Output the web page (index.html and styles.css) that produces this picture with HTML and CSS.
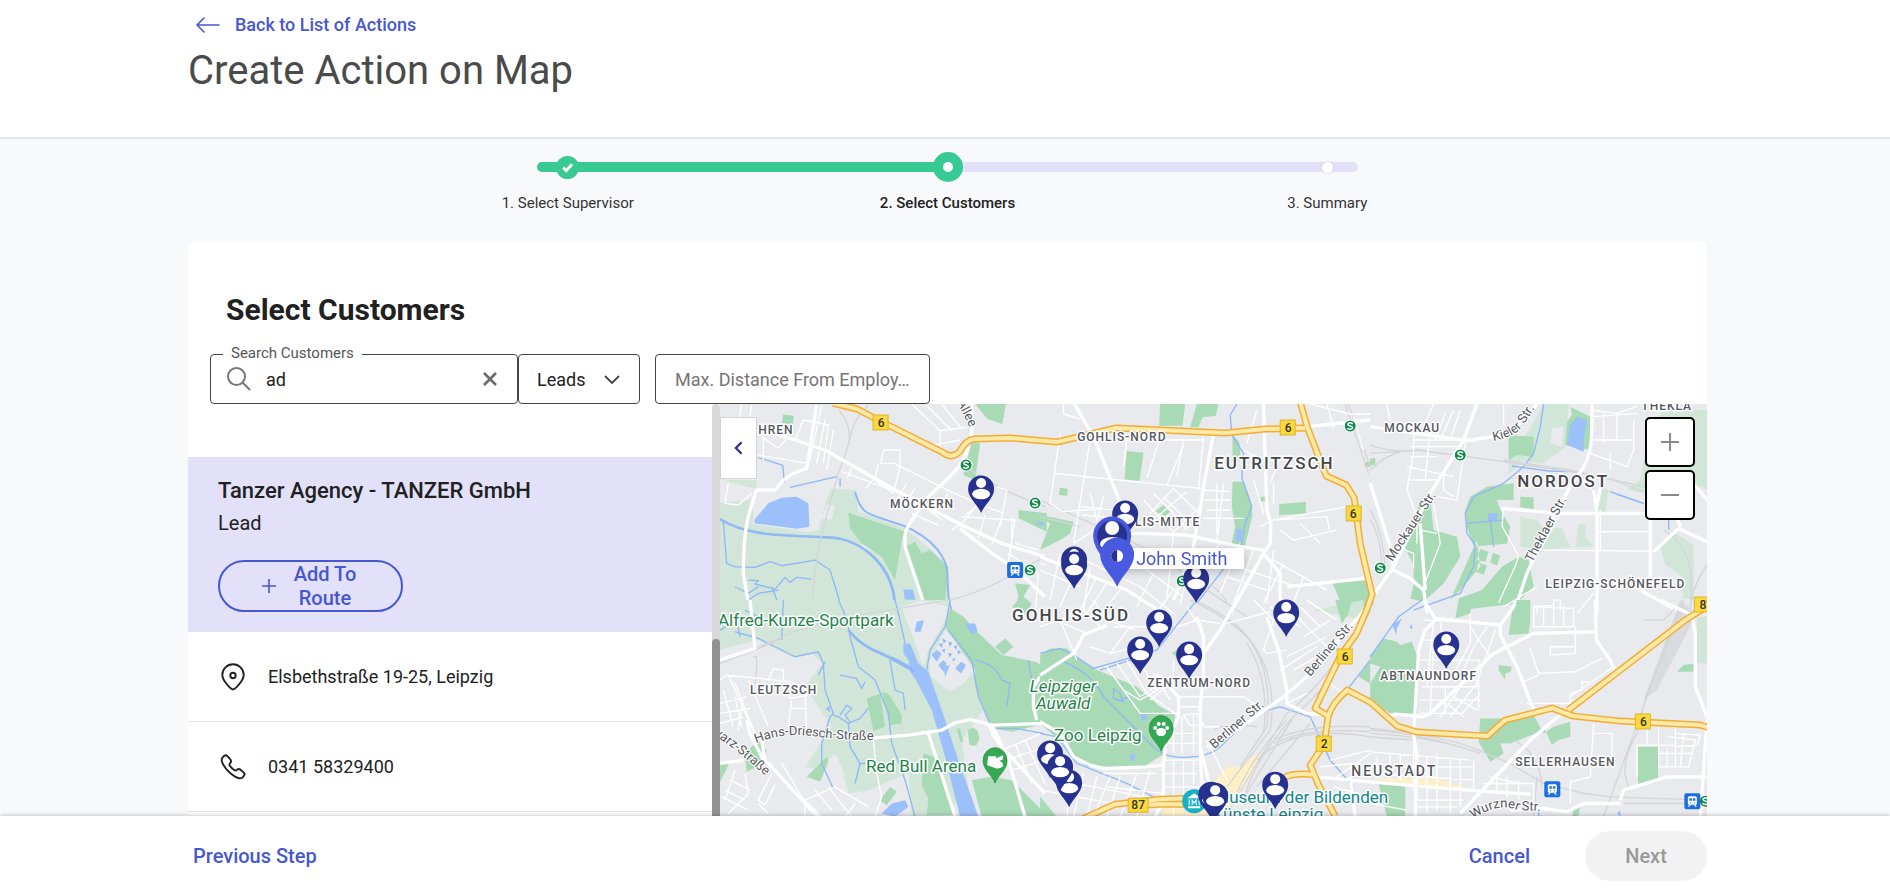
FILE: index.html
```html
<!DOCTYPE html>
<html lang="en">
<head>
<meta charset="utf-8">
<title>Create Action on Map</title>
<link rel="stylesheet" href="styles.css">
</head>
<body>
<header class="page-header">
  <a class="back-link" href="#">
    <svg class="back-icon" viewBox="0 0 24 16" width="24" height="16"><path d="M8 1 1 8l7 7M1 8h22" fill="none" stroke="currentColor" stroke-width="1.6" stroke-linecap="round" stroke-linejoin="round"/></svg>
    Back to List of Actions
  </a>
  <h1 class="page-title">Create Action on Map</h1>
</header>

<main class="content">
  <ol class="stepper">
    <li class="step step-done"><span class="dot"><svg viewBox="0 0 24 24" width="23" height="23"><path d="m7.500 12 3.200 3.300 6-6.600" fill="none" stroke="#fff" stroke-width="3"/></svg></span><span class="step-label">1. Select Supervisor</span></li>
    <li class="step step-current"><span class="dot"></span><span class="step-label">2. Select Customers</span></li>
    <li class="step step-next"><span class="dot"></span><span class="step-label">3. Summary</span></li>
  </ol>

  <section class="card">
    <h2 class="card-title">Select Customers</h2>
    <form class="filters">
      <div class="field field-search">
        <label class="field-label" for="search">Search Customers</label>
        <svg viewBox="0 0 24 24" width="24" height="24" fill="none" stroke="#777" stroke-width="2"><circle cx="9.500" cy="9.500" r="8.500"/><path d="m15.800 15.800 7.200 7.200"/></svg>
        <input id="search" type="text" value="ad">
        <button class="clear" type="button" aria-label="Clear"><svg viewBox="0 0 14 14" width="14" height="14"><path d="m1 1 12 12M13 1 1 13" stroke="#6b6b6b" stroke-width="2.600"/></svg></button>
      </div>
      <div class="field field-type">
        <select aria-label="Customer type"><option>Leads</option></select>
        <svg class="chevron" viewBox="0 0 16 9" width="16" height="9"><path d="m1 1 7 7 7-7" fill="none" stroke="#444" stroke-width="1.800"/></svg>
      </div>
      <div class="field field-distance">
        <input type="text" aria-label="Max. distance" placeholder="Max. Distance From Employ…">
      </div>
    </form>

    <div class="workspace">
      <aside class="results">
        <div class="result-list">
          <div class="customer">
            <h3 class="customer-name">Tanzer Agency - TANZER GmbH</h3>
            <p class="customer-type">Lead</p>
            <button class="add-route" type="button">
              <svg viewBox="0 0 14 14" width="14" height="14"><path d="M7 0v14M0 7h14" stroke="currentColor" stroke-width="1.600"/></svg>
              <span class="add-text">Add To Route</span>
            </button>
          </div>
          <div class="detail">
            <svg viewBox="0 0 28 28" width="28" height="28" fill="none" stroke="#222" stroke-width="1.900"><path d="M14 26.500c-1 0-2-.7-3-1.800C7 20.500 3.300 17 3.300 12a10.700 10.700 0 0 1 21.400 0c0 5-3.700 8.500-7.700 12.700-1 1.100-2 1.800-3 1.800z"/><circle cx="14" cy="12.500" r="2.700"/></svg>
            <span>Elsbethstraße 19-25, Leipzig</span>
          </div>
          <div class="detail">
            <svg viewBox="0 0 28 28" width="28" height="28" fill="none" stroke="#222" stroke-width="1.900" stroke-linejoin="round"><path d="M3.300 4.800c1-1.300 2.300-2.400 3.500-2.500 1.300 0 2 .8 4.800 4.500.8 1.200.5 2.200-.3 3.200-1 1-1.200 1.600-.6 2.600 1.200 1.900 2.800 3.500 4.700 4.700 1 .6 1.600.4 2.600-.6 1-.8 2-1.100 3.200-.3 3.700 2.800 4.500 3.500 4.500 4.800-.1 1.200-1.200 2.500-2.500 3.500-1.500 1.100-4 .6-6.700-.9a33 33 0 0 1-12.300-12.300C2.700 8.800 2.200 6.300 3.300 4.800z"/></svg>
            <span>0341 58329400</span>
          </div>
        </div>
        <div class="scrollbar"><div class="thumb"></div></div>
      </aside>

      <div class="map">
        <svg class="map-canvas" viewBox="0 0 987 412" preserveAspectRatio="xMinYMin slice">
          <defs>
            <g id="pin"><path d="M0 0C-3-8-13-15-13-24a13 13.500 0 0 1 26 0C13-15 3-8 0 0z" fill="#27318f"/><circle cy="-30" r="5" fill="#fff"/><ellipse cy="-19" rx="9" ry="5.200" fill="#fff"/></g>
            <g id="s"><circle r="6" fill="#0f8a4b" stroke="#fff" stroke-width="1"/><path d="M2.500-2C1.500-3.700-2.500-3.500-2.300-1.500-2 .3 2.500-.3 2.500 1.700 2.300 3.700-1.700 3.700-2.700 2" fill="none" stroke="#fff" stroke-width="1.500"/></g>
            <g id="train"><rect x="-8" y="-8" width="16" height="16" rx="2" fill="#1b6fe0"/><rect x="-4.500" y="-5" width="9" height="8.500" rx="1.500" fill="#fff"/><path d="M-3-3h2.500v2.500H-3zM.5-3H3v2.500H.5zM-2.500 1h1v1h-1zM1.500 1h1v1h-1z" fill="#1b6fe0"/><path d="m-2 3.500-2 2M2 3.500l2 2" stroke="#fff" stroke-width="1.300"/></g>
            <g id="green-pin"><path d="M0 0C-2-7-12-13-12-22.500a12 13 0 0 1 24 0C12-13 2-7 0 0z" fill="#34a853" stroke="#1e8e3e" stroke-width=".7"/></g>
            <path id="st-kieler" d="M773 37Q796 33 804 20T816 2"/>
            <path id="st-mockauer" d="M672 158L716 91"/>
            <path id="st-thekla" d="M812 159L846 96"/>
            <path id="st-berliner-n" d="M590 273L636 219"/>
            <path id="st-berliner-s" d="M494 345L545 301"/>
            <path id="st-hans" d="M36 339Q64 328 92 332T154 336"/>
            <path id="st-schwarz" d="M-9 329Q24 350 58 384"/>
            <path id="st-wurzner" d="M753 415Q777 398 797 406L824 407"/>
            <path id="st-allee" d="M237-2L251 26"/>
          </defs>

          <rect width="987" height="412" fill="#e8eaed"/>

          <!-- north-west -->
          <g transform="translate(-5 -4) scale(.33333)">
            <path class="park" d="M0 310 110 300 120 370 290 395 350 265 420 270 430 335 570 385 650 450 700 510 700 650 0 650zM25 240h100v25l-30-5z"/>
            <path class="land" d="M110 372 125 320 165 280 260 262 335 262 340 275 310 390 270 395zM335 315h25l-10 45-30-5zM440 440l15-50 30 5-10 60z"/>
            <path class="wood" d="M400 338 570 395 560 420 540 540 500 470 440 430 405 385zM570 440 600 425 620 460 645 450 700 500 690 600 625 610zM205 43 237 48 233 75 200 68zM780 12h92l-10 60-45-15zM770 125l25 5-15 110-35-15zM910 330l85 10v55l-85-40zM900 550l45 5-20 35 25 20-15 30-35-15 10-35z"/>
            <path class="lake" d="M118 360 160 310 200 293 245 290 280 310 283 380 245 386 120 370zM565 568l28 0 8 32-32-2zM955 370l30-5v12z"/>
            <path class="river thick" d="M15 357C100 410 200 405 340 412 440 415 545 500 540 640"/>
            <path class="river medium" d="M420 275C440 350 460 340 560 375 660 415 700 480 697 530L700 590 710 640"/>
            <path class="river" d="M25 365 35 490 60 500 120 502 165 485 200 497 300 480 345 510 385 640M100 540l30 2-10 10 60 15 30-35 15 15 20-15 45 5M60 560l40 20 30-20M170 560l20 50 60-5M100 600l30-20 60-10M128 173l30 8 45 15 5 50M225 262 365 230M375 235v25"/>
            <path class="rail" d="M460 15C390 90 430 70 370 220 340 340 300 420 290 640M370 30Q410 70 402 130M760 205Q850 270 990 320M560 630Q760 600 880 530L990 470"/>
            <path class="minor" d="M80 12 70 80M110 15l-10 60M320 15l-35 165M330 60l-25 130M265 60 340 75 325 190M265 60 240 120M355 90l-20 120M145 110v70M130 165 275 190M190 145l-50-35M220 110l-30 35M40 250l-10 60 40 5 40-35M590 12l85 80 80-10M630 12l80 80M680 12l60 75M675 92v45M655 135l80-15M505 150h50v50M505 150l-8 40h40l100 50 60 30 90 40 80 30M555 200l-20 80M490 190l-10 50 55 40M410 205l-15 30M600 265l-20 30M575 250l-30 50M475 240l-25 25M380 215l220 80M700 280l-50 60M800 300l-60 70M740 370l-30 20M810 345l-20 70M860 355l-30 80M900 355l-20 130M845 260l30 10-20 110M740 350 900 360M750 345l80-55M890 350v80M900 430l70 20M880 460l90 60-10 120M975 490l15 5M630 320l50 40M590 340l80 35"/>
            <path class="road" d="M305 15 275 205 230 222 205 240 180 270 125 270C95 350 85 400 85 520L105 640M760 140C740 210 690 240 640 290 560 400 570 390 570 440L630 620M735 385 830 460 900 505 990 590M770 12v110"/>
            <path class="road" d="M150 90 330 150 540 270 740 375 860 430 990 470"/>
          </g>

          <!-- north -->
          <g transform="translate(320 -4) scale(.33333)">
            <path class="wood" d="M360 12h75l-8 65h-70zM470 12h65l-8 35-40 5-12 30h-25zM260 153l50 5-12 85-45-5zM577 245h35l20 60 5 40-22 90-43 5 13-60-10-60zM577 105l20 20 5 55-25 5zM60 263l24 4-3 21-25-4zM717 312l80-6v34l-80 6zM345 335l25-20 20 20-15 12zM0 345l100 20-10 35-30 20-60 30 30-80-30-20zM875 545l115-10v80l-80 10zM972 185h20v15h-17zM662 290h22v14h-22z"/>
            <path class="lake" d="M588 385l18 2-4 38-16-2z"/>
            <path class="river" d="M590 12 570 45 575 105 610 160 605 235 635 320 615 370 605 430 540 520 470 610"/>
            <path class="rail" d="M0 300Q220 400 350 460 480 560 620 650M0 350 120 380M560 610q-20-50-100-80M910 0l75 220M920 0l70 200"/>
            <path class="minor" d="M70 12v30l50 15M150 120 100 430M260 120l-10 80M360 115l-40 120M430 120l-20 110M430 135l-50 120M490 110l-15 160M130 120h360M45 220l380 40 60 5M60 100l-30 210 40 25 120-10M120 320l110 10M125 345l120 10M150 280l20 80M190 290l-20 75M100 430l80-50M310 300l55 60 40 40M340 280l50 50 50 60M400 265 330 340M440 275 350 350M480 320 400 395M400 265l80 80M370 290l80 80M490 300h80M490 270l80 5M500 330h70M490 355h120M530 250v150M550 250l-20 180M0 510l120 50M60 460 30 600M120 480 60 620M150 500l-20 130M170 530l-50 100M200 550l-60 90M240 570l-50 60M90 460 300 560 400 640M280 480l150 110M340 520 290 620M400 570l-60 80M400 400 380 600M470 410l-50 200M540 430l-60 70M600 430l-60 150M640 450l-60 160M560 530l120 40M590 500l180 60M700 450l-20 160M700 480l160 90M730 490l-60 120M790 530l-40 100M660 380l40-20 220-40M700 250v60M720 170l-30 80M720 390l40 30 130-30M700 360l160-10 10 50M780 370l60 60M640 240l30 100M610 150l70 40M810 12l120 30 60 0M860 12l20 70M940 50l30 100M650 30l-30 100"/>
            <path class="road" d="M103 12 160 110 245 320 230 400 300 400 440 405 600 440 670 450M520 100 490 260 480 330 455 460 400 600M670 12 680 330 692 370 690 430 670 460 570 640M670 460 720 520 720 620M0 470 260 570 370 640M800 80l190-20M740 560 980 535"/>
          </g>

          <!-- north-east -->
          <g transform="translate(650 -4) scale(.33333)">
            <path class="park" d="M520 12h75l-10 130-70 50-60-10-40 40 0-60 60-70zM870 30h150v250l-20-20-80 0-30 60-60-40-60-10 40-30 10-60 55-10zM450 350l50 10 15 20 60 5 25 55-60 10-90-10zM625 375l20-5v40l25 30h-55zM870 440l40-45 60 40v160h-30l-10-70-45-30zM690 260l25 10-10 70-35 5z"/>
            <path class="land" d="M880 110h60v60l-50 20zM545 85l35-5-5 60-35-10z"/>
            <path class="wood" d="M415 105l75 5 0 60-50-5-25 15zM600 20l60 30 0 100-75-15 5-70 15-20zM300 290 350 260 390 255 430 250 430 300 380 300 390 330 420 380 410 430 310 440 290 380 285 330zM450 290l40 2v35l-40-5zM120 400l30-100 30 0 10 90 70 20 10 60-50 80-60 55-40-10 20-80-30-60-20-10zM240 600l30-30 60-70-10-80zM330 447l25 8-10 30-25-5zM368 458l22 8-10 30-20-8zM325 488l25 8-10 28-22-8zM265 595l70-25 60-70 50-30 30 10 15 80-50 50-170 20zM130 505l35 0 0 60-35-30zM0 175h15v20H0z"/>
            <path class="lake" d="M600 75l20-25 30 10-10 60v35l-50-20zM355 340l28 0-3 22-28 0z"/>
            <path class="river" d="M520 12 510 80 490 160 460 200 400 250 310 290 285 340 290 400 315 435 310 500 270 580 130 630M290 370l110-10M370 440l-10-80M425 198l110 15 60 2M720 275l100 35M740 283l80 28M895 350v40"/>
            <path class="rail" d="M0 135Q70 160 140 150L400 185 700 230 820 275M0 160 140 152M400 180 600 210 820 260M0 210Q40 170 90 155M0 330Q40 400 45 510M0 360Q35 410 35 520M880 390Q980 450 960 600M1020 480Q960 560 960 640"/>
            <path class="minor" d="M130 100v60l-20 110M180 90l-15 150M130 120h150M110 200l140 30M120 170h80M120 140h150M110 240l90 0M225 40l-30 80M250 30l-40 90M270 30l-30 90M50 12l10 50M190 12l-30 70M290 100l-30 200-60-10M220 210l0 60 30 20M110 270l30 80 0 80M190 310l20 120-50 130M150 390l50 10M80 440l50 20v40M400 12v60l30 20M660 30l80 10 60-20M670 50l130-10M670 120h120l0 30-20 50-110-40M700 40v90M740 40v80M790 60v60M720 160v50M860 110l20 90 40 0M690 330v120M680 395h165M500 450l350 3M400 328l-5 50 50 90-10 30-50 110M490 620l60-5M550 630V600h20v30M500 640v-20M400 620l100-60M620 640l50-60M570 340l-60 110"/>
            <path class="road" d="M320 12 280 120 180 280 130 380 70 500 0 600M0 80 100 95 290 122 400 105 460 60 500 12M290 122 320 120M665 12C665 120 670 180 610 240 560 340 520 400 470 520L430 640M670 270l10 70v300M690 265l-12 60M395 325l170 15h275v190M850 455l75-70 95 45M0 250 60 440 70 510 120 535 160 570 170 640M150 370 165 570M930 380 880 250 960 240 1020 310M810 570l70 40 60 30"/>
          </g>

          <!-- south-west -->
          <g transform="translate(-5 196) scale(.33333)">
            <path class="park" d="M15 0H705L700 90 780 230 790 290 810 320 770 380 740 420 760 560 690 650H590L580 520 460 570 400 580 380 500 360 460 310 510 270 500 350 380 270 260 320 190 290 160 230 170 130 120 15 150zM570 0H700z"/>
            <path class="land" d="M560 20 620 0 700 20 690 60 640 150 625 200zM640 190 690 90 770 170 780 210 745 250 705 275 650 230zM660 0h30v10z"/>
            <path class="wood" d="M705 25 745 50 780 90 860 165 960 185 990 200V370L890 395 830 385 780 260 780 210 690 80zM455 295l40-15 15 100-35 12zM500 275l20 5 40 65 0 25-35 5zM90 460l40-40 25 30-10 40-50 25zM275 530l60-60 5 15-25 60zM15 490l30-5-30 60zM625 460l50 15 40 170h-80l5-50-20-40zM770 540l60-10 60 10 90 90V650H800zM495 600l30-40 20 15-30 40zM725 385l10 0 10 40-10 0zM758 390l15-8 15 10 5 25-10 20-20-2zM840 140l30-25 25 25-30 25zM890 20l25-25 40 40-20 10z"/>
            <path class="lake" d="M565 130 585 130 610 190 640 215 680 330 730 480 790 650H735L690 470 650 330 600 235 585 215 580 180 565 160zM605 65l22-5-10 35-18 0zM750 70l30 0 8 25-18 8zM500 640l30-30 40-10 10 20-40 30zM650 165l15-15 15 10-15 25zM670 195l15-15 10 10-10 25zM720 205l18-20 15 10-15 25zM685 200l20-5-15 35zM330 325l15-8 0 20z"/>
            <path d="M682 115l12 6-8 9zM670 133l12-4 0 14zM700 125l12 3-8 12zM715 140l10-5 0 14zM680 150l10-4-2 14zM700 158l12 4-10 10zM728 150l10 5-10 10zM712 175l10 0-8 10z" fill="#8fb8fa"/>
            <path class="river thick" d="M400 90Q440 140 500 160L600 215M495 160 545 180 590 205"/>
            <path class="river" d="M370 0Q400 60 405 110L430 200 480 240 520 340 530 430 570 540 600 650M540 0Q560 80 570 130M705 0 700 30 690 80 645 150 635 210M700 90 770 180 790 290 830 385 900 385 985 400M60 95 130 115 180 140 240 170 310 155 325 190 330 270 355 340 345 350 320 430 320 490 355 565M310 225l20-40M355 345 370 350 400 370 405 440 435 490 450 490M400 370 435 355 460 325M375 345l20-30 15 10-20 20 15 20M375 225l50 10 15 30 10-20M525 180 540 270 565 280 570 330M435 490l-15 60M780 180q60 10 80 60l25 10-10 70M15 90l50-30 10 50M90 30l40 20M205 0l-5 120M940 180l10 60"/>
            <path class="rail" d="M15 185 120 145 250 90 400 50 700 0"/>
            <path class="rail" d="M15 190 120 150 200 115M115 170l10 0v40l-5 40"/>
            <path class="minor" d="M15 240 35 225 230 245 270 280 275 390M160 240l15-35 30 5 0 30M190 240l35 55 50-10M225 325h50M230 300l-10 80M15 310l80-20M15 340l90-15M25 270l30 110M60 290l20 90M85 290l-15 100M15 370l70-20M100 240l60 140M60 250l60 150M40 225l80 180M90 520l10 60-60 60M60 510l-30 90M20 590l80 40M30 570l60 30M45 540l60 30M170 520l-40 80 20 15 30-60M130 610l30 30M200 490l60 100 60 60M270 600l90-40 100 60M300 570l50 60M340 560l70 90M420 610l-30 40M270 600v50M475 420l10 100 15 70-20 60M860 450 980 400M870 480l110-35M890 510l100-30M900 430l50 120M930 420l60 130"/>
            <path class="road" d="M105 0 120 145 15 180M95 360 105 400 145 480 160 490 280 620 310 650M15 490l70-10M140 420 150 480M975 230l-20 30 0 60 10 40"/>
            <path class="road" d="M460 415 580 405 680 390 720 368 765 358 830 375 990 370M830 375Q850 410 880 480L930 650M820 375 840 410M640 400 720 650M830 400 860 440 990 580"/>
          </g>

          <!-- centre -->
          <g transform="translate(320 196) scale(.33333)">
            <path class="park" d="M820 30l150-30v60z"/>
            <path class="wood" d="M0 165 30 145 80 145 115 175 160 205 290 260 360 320 405 345 400 380 375 460 325 490 310 505 140 500 90 460 70 430 0 370zM0 590l50 60H0zM395 160l20-15 10 20 0 15zM885 0h50l-10 40-20 30zM990 180v70l-35-20z"/>
            <path d="M430 650 560 500 600 500 640 470 665 455 650 500 560 640z" fill="#fdf0c8"/>
            <path d="M370 620h60v30h-65z" fill="#fdf0c8"/>
            <path class="lake" d="M300 345l18-8 2 18-12 10zM270 462l15 0-2 20-13 0z"/>
            <path class="river" d="M0 160 60 145 100 165 160 205 350 150 470 0M180 210 330 160M60 180q100 40 130 110l140 140Q370 480 450 470 520 470 560 420L650 340 720 320 810 350 870 480 940 560M220 265l20 15 10 25-30-10zM240 300l25-10 10 20M0 400l50 10 60 80 150 60 80 40M990 180 920 270"/>
            <path class="rail" d="M450 0Q560 50 620 110 700 210 680 380L600 500M460 0Q580 50 630 120 715 230 690 390L560 560M620 130Q690 240 670 400M990 10Q880 230 740 340L560 640M990 30Q900 230 760 350L600 610M700 420Q800 370 990 380M700 430Q800 380 990 395M650 480Q760 370 990 410M760 350Q640 480 610 600M740 360Q640 460 580 600M810 370 650 560M520 390q30-20 130-10"/>
            <path class="minor" d="M0 80 60 60 130 20M60 60l50 120M130 100l-30 60M130 30l60 60M0 40l140 60M160 0l40 60M200 60l90 30M150 140l60 20 80-20M210 160l60-80M220 80l120 0M230 190l70 100M260 180l60 100M290 170l60 100M250 270l50 30 100-60M300 290l90-60M330 300l60-50M320 280l100 70M340 220l50 80M200 200l100 140 110 0M400 180v50M410 80l60-20M440 20l50 80M470 60l70 10M410 290h200l60 40M420 320h60M430 345l40-5 20 35-40 0zM380 400l100 0M380 430h90M400 380v80M425 350v110M460 340v120M490 380h50M500 420l60 120M640 0 700 60 670 150 680 160 740 150M560 70l130-35M690 20l90 60M780 20l60 60M770 50l100 100M790 110l80-50M740 170l120-60M760 210l140-80M800 0l90 60M720 210l110-70M870 250l40 30M740 310l60-30M40 440l60 150M100 500l-20 150M130 520l-30 130M170 530l-30 120M210 530l-50 120M240 530l-40 120M290 520l-50 130M330 510l-40 140M60 540l300 60M0 570l330 60M350 520l-160 0M200 560l170 20M370 480h110M370 520h100M370 560h110M400 480v170M430 480v140M460 480v80M870 480l120-30M890 530l100-70M880 560l110 30M840 500l100-10"/>
            <path class="road" d="M0 225 100 160 130 105 200 75M0 365 60 400 100 470 150 495 190 505 320 500 370 495 375 440 415 350 415 290 350 220M370 490 370 600 345 650M470 50 490 110 490 220 480 320 480 440 485 560M590 0 540 90 490 160M500 440 560 410 730 290 800 230 990 10M740 270 740 310 800 340 860 345M740 270 715 150 680 50M830 530l160 15M930 530 945 650M480 440 510 560"/>
          </g>

          <!-- south-east -->
          <g transform="translate(650 196) scale(.33333)">
            <path class="park" d="M980 50h40v140h-40z"/>
            <path class="wood" d="M40 115 80 125 90 135 125 125 145 180 140 340H60L0 300V250L30 200 0 190V170zM265 0h40l-5 40-45 15zM430 0h50v60l-5 40-60 5zM385 195l40 5-5 15-15 5 0 20-20-30zM330 355l70 0 90-10 30 55 30-20 50-15 0 45-35 10-20 15-20-45-30 10-75 30-30 0 10 30-40 25-35-60zM803 440h60v105l-60 10zM940 195l30-5 0 25-50 0zM25 550l80 10 0 90H50zM610 630l20-15-5 35-20 0zM0 0h10v20z"/>
            <path class="lake" d="M65 75l30-20-15 30 0 20zM118 85l5-15 5 15zM740 640l10-10v20z"/>
            <path class="river" d="M155 0 85 50 50 100 0 170M505 620v30"/>
            <path d="M930 0 980 40 860 270 820 300z" fill="#d9dcdf"/>
            <path class="rail" d="M0 385Q180 400 300 440L420 490 520 550 640 580 720 590 1010 600M0 400Q180 410 300 450M500 530 490 650M430 420Q510 460 515 560M940 0 830 290 700 650M930 30 830 280 800 400Q740 500 780 570M820 60l60 0 40-40M0 390Q160 400 330 460M760 610h250M0 410q90 10 140 8"/>
            <path d="M0 535h200l110 35-130-5z" fill="#fdf0c8"/>
            <path class="minor" d="M160 120h30l-10 220M190 60l-20 200M210 60l10 100M300 40v90l-60 110M350 80l-40 60-30 70M375 90l-60 170M300 80l60 90M150 180l180 0M150 220l170 20M155 260l170 0M150 300l180 0M150 340h125l55-60M210 350l80-120M240 350l80-100M250 290l70 40M230 310l50 40M225 260v80M325 180v150M160 60l220 10M490 20v60h120V25zM520 20v60M550 20v60M580 20v60M615 80v80l-75 5v-25h70M480 145l25 75 110-5 80-40M460 245l45-20M600 310v-30l35-10v-25h20M600 290 730 200M470 310h130M670 370 660 530 600 545 600 610M670 400h55v80l-30 20M800 435v90M800 435l110 0M830 390v40M865 370v130h90l20-80-80-10M865 460h100M890 450v50M915 380v120M940 400l-10 100M910 400l80 5-10 30-70 5M0 455 300 480M20 470l0 60M60 460l0 80M90 460v80M130 440v130M170 470v170M200 460v170M240 480v160M270 480v140M310 480v90M0 500h310M0 520l310 20M130 600h150M140 620h120M340 550l150 0v80M380 530v50M410 530v60M445 540v60M360 530l90 20M0 610l110 20"/>
            <path class="road" d="M160 0 195 55 390 75 430 20 435 0M195 60 165 90 145 150 135 320 130 400 140 470 135 650M50 350 75 342 160 350 180 340 370 160 460 115 490 100 675 95M675 0 678 120 720 180 735 215M390 75 390 105 440 200 490 330M870 0 965 45 975 100 975 260 1010 350M580 335 480 420 270 640M750 600 760 570 890 530 1010 530M420 630l100-5 70 10 50-25h110M0 545 320 572 480 582M1010 360l-20 290"/>
          </g>

          <!-- main roads -->
          <g class="casing">
            <path d="M113-1 137 5 160 17 222 48Q232 56 240 47 246 36 254 35L290 34 337 38 396 24 440 26 505 29 545 25 585 24"/>
            <path d="M580-2 587 23 597 49 606 72 626 81 634 94 640 140 651 187 652 190 646 207 636 230 620 252 595 304 608 312 604 340 590 361 598 380 615 412"/>
            <path d="M608 312Q612 299 627 286L650 298 677 322 697 328 767 332 785 316 832 304 853 312 900 317 980 321 990 324"/>
            <path d="M848 306 900 266 965 216 990 200M362 415 395 400 440 395 470 394M420 401 440 400 470 400M565 373Q575 368 596 371"/>
          </g>
          <g class="highway">
            <path d="M113-1 137 5 160 17 222 48Q232 56 240 47 246 36 254 35L290 34 337 38 396 24 440 26 505 29 545 25 585 24"/>
            <path d="M580-2 587 23 597 49 606 72 626 81 634 94 640 140 651 187 652 190 646 207 636 230 620 252 595 304 608 312 604 340 590 361 598 380 615 412"/>
            <path d="M608 312Q612 299 627 286L650 298 677 322 697 328 767 332 785 316 832 304 853 312 900 317 980 321 990 324"/>
            <path d="M848 306 900 266 965 216 990 200M362 415 395 400 440 395 470 394M420 401 440 400 470 400M565 373Q575 368 596 371"/>
          </g>

          <g class="shields">
            <path d="M153 11h15v15h-15zM560 16h15v15h-15zM626 102h15v15h-15zM974 193h20v15h-20zM617 245h15v15h-15zM596 332h15v15h-15zM408 394h20v14h-20zM915 310h15v15h-15z"/>
            <text x="161" y="23">6</text><text x="568" y="28">6</text><text x="633" y="114">6</text><text x="986" y="205">87</text><text x="625" y="257">6</text><text x="604" y="344">2</text><text x="418" y="405">87</text><text x="923" y="322">6</text>
          </g>

          <g class="street">
            <text><textPath href="#st-kieler">Kieler Str.</textPath></text>
            <text><textPath href="#st-mockauer">Mockauer Str.</textPath></text>
            <text><textPath href="#st-thekla">Theklaer Str.</textPath></text>
            <text><textPath href="#st-berliner-n">Berliner Str.</textPath></text>
            <text><textPath href="#st-berliner-s">Berliner Str.</textPath></text>
            <text><textPath href="#st-hans">Hans-Driesch-Straße</textPath></text>
            <text><textPath href="#st-schwarz">warz-Straße</textPath></text>
            <text><textPath href="#st-wurzner">Wurzner Str.</textPath></text>
            <text><textPath href="#st-allee">Allee</textPath></text>
          </g>

          <g class="district">
            <text x="18" y="30">WAHREN</text><text x="170" y="104">MÖCKERN</text><text x="357" y="37">GOHLIS-NORD</text><text x="396" y="122">OHLIS-MITTE</text><text x="664" y="28">MOCKAU</text><text x="921" y="6">THEKLA</text><text x="825" y="184">LEIPZIG-SCHÖNEFELD</text><text x="30" y="290">LEUTZSCH</text><text x="427" y="283">ZENTRUM-NORD</text><text x="660" y="276">ABTNAUNDORF</text><text x="795" y="362">SELLERHAUSEN</text>
          </g>
          <g class="district district-mid"><text x="631" y="372">NEUSTADT</text></g>
          <g class="district district-large"><text x="494" y="65">EUTRITZSCH</text><text x="797" y="83">NORDOST</text><text x="292" y="217">GOHLIS-SÜD</text></g>
          <g class="poi">
            <text x="-2" y="222">Alfred-Kunze-Sportpark</text><text x="146" y="368">Red Bull Arena</text><text x="334" y="337">Zoo Leipzig</text>
            <g class="forest"><text x="343" y="288">Leipziger</text><text x="343" y="305">Auwald</text></g>
            <g class="museum"><text x="668" y="399">Museum der Bildenden</text><text x="603" y="416">Künste Leipzig</text></g>
          </g>

          <use href="#s" x="246" y="61"/><use href="#s" x="315" y="99"/><use href="#s" x="310" y="166"/><use href="#s" x="630" y="22"/><use href="#s" x="462" y="177"/><use href="#s" x="740" y="51"/><use href="#s" x="660" y="164"/><use href="#s" x="985" y="397"/>
          <use href="#train" x="295" y="166"/><use href="#train" x="832" y="385"/><use href="#train" x="972" y="397"/>

          <use href="#green-pin" x="275" y="379"/><path d="M268 352h8v2l7-3v4l-4 2q4 0 4 5-5 4-10 1l-6-2z" fill="#fff"/>
          <use href="#green-pin" x="441" y="347"/><g fill="#fff"><ellipse cx="441" cy="328" rx="5" ry="4"/><circle cx="435" cy="324" r="2"/><circle cx="438.500" cy="320" r="2"/><circle cx="443.500" cy="320" r="2"/><circle cx="447" cy="324" r="2"/></g>
          <g><circle cx="474" cy="397" r="12" fill="#18b1c4"/><path d="M467 394h14l-7-5zM468 402h12v2h-12z" fill="#fff"/><path d="M469 395v6M479 395v6M472 401v-5l2 3 2-3v5" fill="none" stroke="#fff"/></g>

          <use href="#pin" x="261" y="109"/><use href="#pin" x="405" y="134"/>
          <use href="#pin" x="354" y="180"/><use href="#pin" x="354" y="185"/>
          <use href="#pin" x="476" y="199"/><use href="#pin" x="566" y="233"/><use href="#pin" x="439" y="243"/><use href="#pin" x="420" y="270"/><use href="#pin" x="469" y="275"/><use href="#pin" x="726" y="265"/><use href="#pin" x="330" y="374"/><use href="#pin" x="349" y="403"/><use href="#pin" x="340" y="387"/><use href="#pin" x="491" y="415"/><use href="#pin" x="495" y="416"/><use href="#pin" x="555" y="405"/>
          <path d="M392 166c-4-11-17-21-17-34a17 17.500 0 0 1 34 0c0 13-13 23-17 34z" fill="#27318f" stroke="#4757de" stroke-width="4"/><circle cx="392" cy="124" r="7" fill="#fff"/><ellipse cx="392" cy="140" rx="12" ry="7" fill="#fff"/>
          <g class="employee-tag"><rect x="397" y="144" width="127" height="21" rx="3" fill="#fff"/><text x="416" y="161">John Smith</text></g>
          <path d="M397 183c-4-11-17-20-17-32a17 17.500 0 0 1 34 0c0 12-13 21-17 32z" fill="#4a5ae0"/><circle cx="397" cy="152" r="6" fill="#fff"/><path d="M397 146a6 6 0 0 0 0 12z" fill="#27318f"/>
        </svg>
        <button class="collapse" type="button" aria-label="Collapse list"><svg viewBox="0 0 10 16" width="9" height="14"><path d="M8.500 1.500 2 8l6.500 6.500" fill="none" stroke="#27318f" stroke-width="2.600"/></svg></button>
        <div class="zoom">
          <button type="button" aria-label="Zoom in"><svg viewBox="0 0 18 18" width="18" height="18"><path d="M9 0v18M0 9h18" stroke="#8a8a8a" stroke-width="2"/></svg></button>
          <button type="button" aria-label="Zoom out"><svg viewBox="0 0 18 18" width="18" height="18"><path d="M0 9h18" stroke="#8a8a8a" stroke-width="2"/></svg></button>
        </div>
      </div>
    </div>
  </section>
</main>

<footer class="page-footer">
  <button class="text-button" type="button">Previous Step</button>
  <div class="footer-actions">
    <button class="text-button" type="button">Cancel</button>
    <button class="next-button" type="button" disabled>Next</button>
  </div>
</footer>
</body>
</html>
```

FILE: styles.css
```css
* { box-sizing: border-box; }

body {
  margin: 0;
  height: 100vh;
  display: flex;
  flex-direction: column;
  overflow: hidden;
  background: #f8f9fb;
  color: #212121;
  font-family: Roboto, sans-serif;
  font-size: 18px;
}

h1, h2, h3, p, ol { margin: 0; padding: 0; }
svg { display: block; flex: none; }
button, input, select { font: inherit; color: inherit; }
button { background: none; border: 0; padding: 0; cursor: pointer; }

.page-header {
  flex: none;
  padding: 13px 183px 42px 188px;
  background: #fff;
  border-bottom: 2px solid #e6e7eb;
}
.back-link {
  display: flex;
  align-items: center;
  gap: 15px;
  padding-left: 8px;
  color: #4757d1;
  font-weight: 500;
  line-height: 24px;
  text-decoration: none;
}
.page-title {
  margin-top: 10px;
  color: #4a4a4a;
  font-size: 40px;
  font-weight: 400;
  line-height: 48px;
}

.content {
  flex: 1;
  min-height: 0;
  display: flex;
  flex-direction: column;
  padding: 13px 183px 0 188px;
}

.stepper {
  position: relative;
  display: flex;
  width: 75%;
  margin: 0 auto 28px;
  list-style: none;
}
.stepper::before,
.stepper::after {
  content: "";
  position: absolute;
  top: 10px;
  left: 14%;
  height: 10px;
  border-radius: 5px;
}
.stepper::before { right: 14%; background: #e2e1f9; }
.stepper::after { right: 50%; background: #38ca94; }
.step {
  z-index: 1;
  flex: 1;
  display: flex;
  flex-direction: column;
  align-items: center;
  gap: 10px;
  color: #333;
  font-size: 15px;
  line-height: 22px;
}
.dot {
  display: flex;
  align-items: center;
  justify-content: center;
  height: 30px;
}
.step-done svg { border-radius: 50%; background: #38ca94; }
.step-current .dot { width: 30px; border: 10px solid #38ca94; border-radius: 50%; background: #fff; }
.step-current { color: #212121; font-weight: 500; }
.step-next .dot::before { content: ""; width: 11px; height: 11px; border-radius: 50%; background: #fff; box-shadow: 0 0 3px #c8c8dc; }

.card {
  flex: 1;
  min-height: 0;
  display: flex;
  flex-direction: column;
  background: #fff;
}
.card-title {
  padding: 50px 38px 26px;
  font-size: 30px;
  font-weight: 700;
  line-height: 36px;
}
.filters { display: flex; padding-left: 22px; }
.field {
  position: relative;
  display: flex;
  align-items: center;
  height: 50px;
  border: 1px solid #444;
  border-radius: 4px;
}
.field input, .field select {
  width: 100%;
  min-width: 0;
  border: 0;
  padding: 0;
  outline: 0;
  background: none;
}
.field-search { width: 308px; gap: 15px; padding: 0 20px 0 16px; }
.field-label {
  position: absolute;
  top: -13px;
  left: 12px;
  padding: 0 8px;
  background: #fff;
  color: #555;
  font-size: 15px;
  line-height: 22px;
}
.field-type { width: 122px; }
.field-type select { appearance: none; height: 48px; padding-left: 18px; }
.chevron { position: absolute; right: 19px; pointer-events: none; }
.field-distance { width: 275px; margin-left: 15px; padding: 0 19px; }
.field-distance input::placeholder { color: #757575; opacity: 1; }

.workspace { flex: 1; min-height: 0; display: flex; }
.results { flex: none; display: flex; width: 35%; }
.result-list { flex: 1; overflow: hidden; padding-top: 53px; }
.customer { padding: 20px 30px; background: #e2e1f9; }
.customer-name { font-size: 22px; font-weight: 500; line-height: 28px; }
.customer-type { margin-top: 2px; font-size: 20px; line-height: 32px; }
.add-route {
  display: flex;
  align-items: center;
  justify-content: center;
  gap: 15px;
  width: 185px;
  height: 52px;
  margin-top: 21px;
  border: 2px solid #4757d1;
  border-radius: 26px;
  color: #4757d1;
  font-size: 20px;
  font-weight: 500;
  line-height: 24px;
}
.add-text { width: 68px; }
.detail {
  display: flex;
  align-items: center;
  gap: 21px;
  height: 90px;
  padding: 0 30px 0 31px;
  border-bottom: 1px solid #e4e4e4;
}
.scrollbar { width: 8px; display: flex; align-items: flex-end; border-radius: 4px 4px 0 0; background: #d9d9d9; }
.thumb { width: 8px; height: 43%; border-radius: 4px 4px 0 0; background: #919191; }

.map { position: relative; flex: 1; min-width: 0; overflow: hidden; }
.map-canvas { width: 100%; height: 100%; }
.collapse {
  position: absolute;
  top: 13px;
  left: 0;
  display: flex;
  align-items: center;
  justify-content: center;
  width: 37px;
  height: 62px;
  border: 1px solid #d4d4d4;
  background: #fff;
}
.zoom { position: absolute; top: 13px; right: 12px; display: grid; gap: 3px; }
.zoom button {
  display: flex;
  align-items: center;
  justify-content: center;
  width: 50px;
  height: 50px;
  border: 2px solid #000;
  border-radius: 5px;
  background: #fff;
}

.park { fill: #d1e6d9; }
.land { fill: #e8eaed; }
.wood { fill: #a8dab5; }
.lake { fill: #9cc0f9; }
.river, .rail, .minor, .road, .casing, .highway { fill: none; stroke-linejoin: round; }
.river { stroke: #90b8f5; stroke-width: 4; }
.medium { stroke-width: 6; }
.thick { stroke-width: 8; }
.rail { stroke: #d3d5d8; stroke-width: 4; }
.minor { stroke: #fff; stroke-width: 4; }
.road { stroke: #fff; stroke-width: 10; }
.casing { stroke: #f2ad33; stroke-width: 7; }
.highway { stroke: #fee9a8; stroke-width: 4; }
.shields path { fill: #fbd83c; stroke: #dfb52a; stroke-width: 1; }
.shields text { fill: #333; font-size: 12px; font-weight: 500; text-anchor: middle; }
.street, .district, .poi { paint-order: stroke; stroke: #fff; stroke-width: 3px; stroke-linejoin: round; }
.street { fill: #55585d; stroke-width: 2px; font-size: 13px; }
.district { fill: #55585e; font-size: 12px; font-weight: 500; letter-spacing: 1px; }
.district-mid { font-size: 14px; letter-spacing: 2px; }
.district-large { fill: #44474c; font-size: 17px; letter-spacing: 2px; }
.poi { fill: #1e8449; font-size: 17px; }
.forest { font-style: italic; text-anchor: middle; }
.museum { fill: #12868c; text-anchor: end; }
.employee-tag { fill: #4757d1; font-size: 18px; filter: drop-shadow(0 2px 4px rgba(0, 0, 0, .25)); }

.page-footer {
  position: relative;
  flex: none;
  display: flex;
  align-items: center;
  justify-content: space-between;
  height: 74px;
  padding: 5px 183px 0 193px;
  background: #fff;
  box-shadow: 0 -1px 4px rgba(0, 0, 0, .2);
  font-size: 20px;
  font-weight: 500;
}
.footer-actions { display: flex; align-items: center; gap: 55px; }
.text-button { color: #4757d1; }
.next-button {
  width: 122px;
  height: 50px;
  border-radius: 25px;
  background: #f2f2f2;
  color: #999;
}
```
